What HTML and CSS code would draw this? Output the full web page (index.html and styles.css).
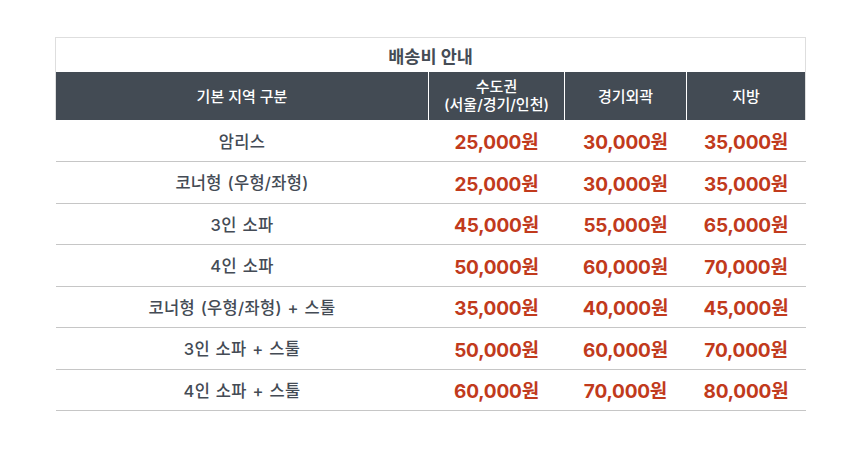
FILE: index.html
```html
<!DOCTYPE html>
<html lang="ko">
<head>
<meta charset="utf-8">
<link rel="stylesheet" href="styles.css">
</head>
<body>
<div class="wrap">
  <table class="fee">
    <colgroup>
      <col class="c1">
      <col class="c2">
      <col class="c3">
      <col class="c4">
    </colgroup>
    <thead>
      <tr><th colspan="4" class="title">배송비 안내</th></tr>
      <tr class="head">
        <th class="first">기본 지역 구분</th>
        <th><span class="ln">수도권</span><span class="ln">(서울/경기/인천)</span></th>
        <th>경기외곽</th>
        <th class="last">지방</th>
      </tr>
    </thead>
    <tbody>
      <tr><td class="name">암리스</td><td class="price">25,000원</td><td class="price">30,000원</td><td class="price">35,000원</td></tr>
      <tr><td class="name">코너형 (우형/좌형)</td><td class="price">25,000원</td><td class="price">30,000원</td><td class="price">35,000원</td></tr>
      <tr><td class="name">3인 소파</td><td class="price">45,000원</td><td class="price">55,000원</td><td class="price">65,000원</td></tr>
      <tr><td class="name">4인 소파</td><td class="price">50,000원</td><td class="price">60,000원</td><td class="price">70,000원</td></tr>
      <tr><td class="name">코너형 (우형/좌형) + 스툴</td><td class="price">35,000원</td><td class="price">40,000원</td><td class="price">45,000원</td></tr>
      <tr><td class="name">3인 소파 + 스툴</td><td class="price">50,000원</td><td class="price">60,000원</td><td class="price">70,000원</td></tr>
      <tr><td class="name">4인 소파 + 스툴</td><td class="price">60,000원</td><td class="price">70,000원</td><td class="price">80,000원</td></tr>
    </tbody>
  </table>
</div>
</body>
</html>
```

FILE: styles.css
```css
html, body {
  margin: 0;
  padding: 0;
  background: #ffffff;
}
body {
  font-family: "Inter", "Noto Sans CJK KR", "Noto Sans", sans-serif;
  color: #444b55;
}
.wrap {
  padding: 37px 55px 0 55px;
}
.fee {
  width: 750px;
  border-collapse: collapse;
  table-layout: fixed;
}
.c1 { width: 373px; }
.c2 { width: 136px; }
.c3 { width: 122px; }
.c4 { width: 119px; }
.fee th, .fee td {
  padding: 0;
  text-align: center;
}
.title {
  height: 34px;
  border: 1px solid #dedede;
  border-bottom: none;
  font-size: 17.5px;
  font-weight: 700;
  color: #454c55;
}
.head th {
  height: 48px;
  background: #434b54;
  color: #ffffff;
  font-size: 15px;
  font-weight: 500;
  line-height: 19px;
  border-left: 1px solid #ffffff;
}
.ln {
  display: block;
  line-height: 18px;
}
.head th.first {
  border-left: 1px solid #dedede;
}
.head th.last {
  border-right: 1px solid #dedede;
}
tbody tr {
  height: 41.5px;
  border-bottom: 1px solid #c6c6c6;
}
.name {
  font-size: 16.5px;
  font-weight: 500;
  color: #444b55;
  letter-spacing: 0.3px;
  word-spacing: 1px;
}
.price {
  font-size: 19px;
  font-weight: 700;
  color: #c13a1c;
  letter-spacing: -0.2px;
}
```
